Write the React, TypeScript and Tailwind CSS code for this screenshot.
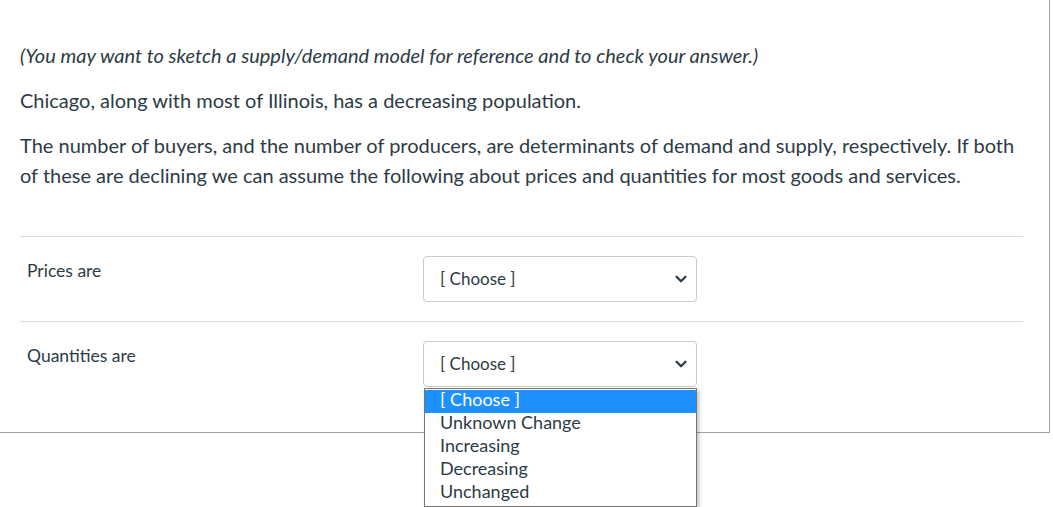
import { ChevronDown } from 'lucide-react';

const options = ['[ Choose ]', 'Unknown Change', 'Increasing', 'Decreasing', 'Unchanged'];

function Select({ open = false }: { open?: boolean }) {
  return (
    <div className="relative w-[274px]">
      <div className="flex h-[46px] items-center justify-between rounded-[4px] border border-[#c7cdd1] bg-white pl-4 pr-[6px] text-[17px] text-[#2d3b45]">
        <span>[ Choose ]</span>
        <ChevronDown size={18} strokeWidth={3} className="text-[#2d3b45]" />
      </div>
      {open && (
        <ul className="absolute left-[1px] top-[47px] z-10 w-[273px] border border-[#767676] bg-white py-[1px] text-[18px] text-[#2d3b45] shadow-[2px_2px_4px_rgba(0,0,0,0.25)]">
          {options.map((o, i) => (
            <li
              key={o}
              className={i === 0 ? 'h-[23px] bg-[#1e90ff] pl-[15px] leading-[18px] text-white' : 'h-[23px] pl-[15px] leading-[18px]'}
            >
              {o}
            </li>
          ))}
        </ul>
      )}
    </div>
  );
}

export default function App() {
  return (
    <div className="min-h-screen bg-white font-['Lato','Liberation_Sans',sans-serif] text-[#2d3b45]">
      <div className="w-[1050px] border-b border-r border-[#a3a3a3]">
        <div className="space-y-[15px] px-5 pt-[40px] text-[20px] leading-[30px]">
          <p className="italic">(You may want to sketch a supply/demand model for reference and to check your answer.)</p>
          <p>Chicago, along with most of Illinois, has a decreasing population.</p>
          <p>
            The number of buyers, and the number of producers, are determinants of demand and supply, respectively. If both
            of these are declining we can assume the following about prices and quantities for most goods and services.
          </p>
        </div>

        <div className="mx-5 mt-[46px] w-[1003px]">
          <div className="flex border-t border-[#dddddd] pt-[19px] pb-[19px]">
            <div className="w-[403px] pl-[7px] pt-[3px] text-[17.5px] leading-[24px]">Prices are</div>
            <Select />
          </div>
          <div className="flex border-t border-[#dddddd] pt-[19px] pb-[45px]">
            <div className="w-[403px] pl-[7px] pt-[3px] text-[17.5px] leading-[24px]">Quantities are</div>
            <Select open />
          </div>
        </div>
      </div>
    </div>
  );
}
